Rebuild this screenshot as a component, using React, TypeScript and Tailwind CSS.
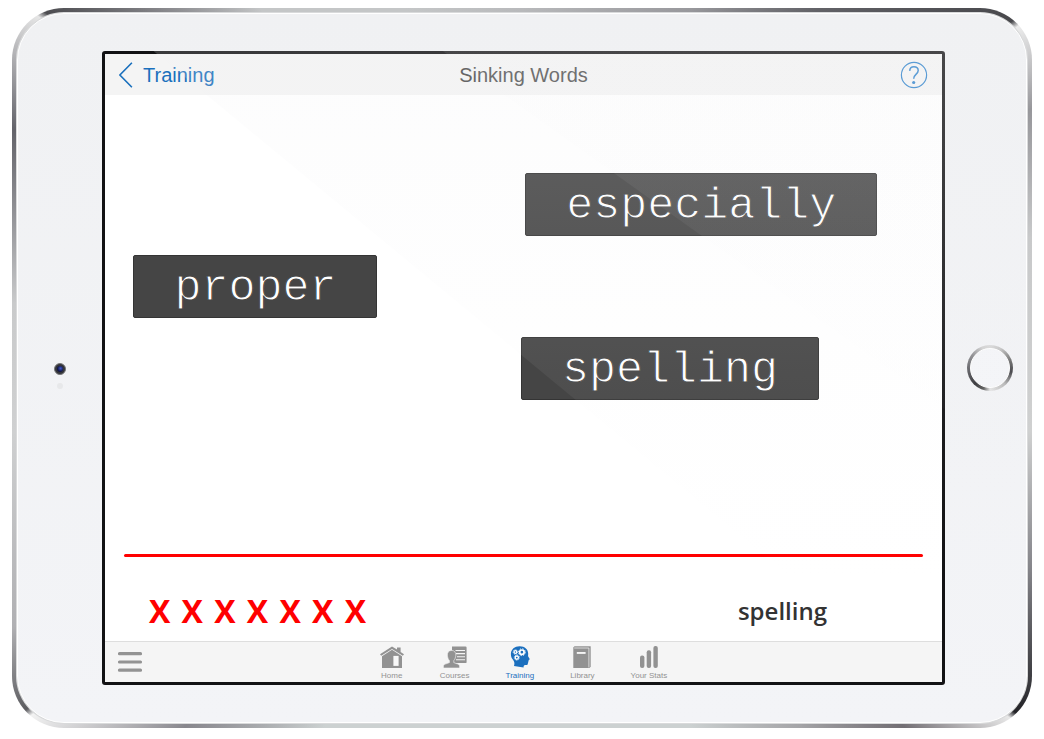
import type { ReactNode } from "react";

const words = [
  { text: "especially", place: "left-[50.2%] top-[17%]" },
  { text: "proper", place: "left-[3.4%] top-[34.9%]" },
  { text: "spelling", place: "left-[49.7%] top-[52.7%]" },
];

function HomeIcon() {
  return (
    <svg viewBox="0 0 24 22" className="h-[22px] w-6" fill="currentColor" aria-hidden="true">
      <path d="M12 0.4 L17 3.6 V1.6 H20.6 V6 L24 8.3 L22.8 9.8 L12 2.9 L1.2 9.8 L0 8.3 Z" />
      <path d="M12 3.8 L22 10.2 V22 H2 V10.2 Z" />
      <rect x="13.4" y="9.9" width="5.2" height="10" fill="#f8f8f8" />
    </svg>
  );
}

function CoursesIcon() {
  return (
    <svg viewBox="0 0 24 22" className="h-[22px] w-6" fill="currentColor" aria-hidden="true">
      <path d="M9 .5 H22.4 Q23.6 .5 23.6 1.7 V15.9 Q23.6 17.1 22.4 17.1 H9 Z" />
      <path d="M12.500 4.500 H22 M13 7.600 H22 M14 10.700 H22 M13 13.800 H22" stroke="#f5f5f5" strokeWidth="1.100" />
      <path
        d="M8.600 4.400 C11.600 4.400 12.900 6.600 12.800 9.200 C12.700 11.600 11.800 13.500 10.800 14.600 V16.600 C13.200 17.600 16 18 16.600 19.800 V22 H.4 V19.800 C1 18 4.200 17.600 6.400 16.600 V14.600 C5.400 13.500 4.500 11.600 4.400 9.200 C4.300 6.600 5.600 4.400 8.600 4.400 Z"
        stroke="#f5f5f5"
        strokeWidth="0.6"
      />
    </svg>
  );
}

function TrainingIcon() {
  return (
    <svg viewBox="0 0 20 22" className="h-[22px] w-5" fill="currentColor" aria-hidden="true">
      <path d="M9.600 .3 C15 .3 18.200 3.700 18.200 7.800 C18.200 9 17.900 9.600 18.200 10.400 L19.700 13 C19.900 13.500 19.500 13.800 18.600 14 C18.800 14.900 18.500 15.300 18.200 15.700 C18.400 16.300 18.100 16.700 17.900 17.200 C18 18.700 17 19.200 15.400 19 C13.900 18.900 13.500 19.700 13.600 21.600 L4 20 C4.800 17.700 4.500 15.900 3 13.800 C1.600 12.200 .8 10.300 .9 7.700 C1.200 3.300 4.600 .3 9.600 .3 Z" />
      <g fill="none" stroke="#fff">
        <circle cx="11.900" cy="6.200" r="2.200" strokeWidth="1.700" />
        <circle cx="11.900" cy="6.200" r="3.400" strokeWidth="1" strokeDasharray="1.335 1.335" />
        <circle cx="5.400" cy="6" r="1.400" strokeWidth="1.300" />
        <circle cx="5.400" cy="6" r="2.300" strokeWidth=".8" strokeDasharray=".9 .9" />
        <circle cx="6.800" cy="11.600" r="1.600" strokeWidth="1.400" />
        <circle cx="6.800" cy="11.600" r="2.600" strokeWidth=".8" strokeDasharray="1.020 1.020" />
      </g>
    </svg>
  );
}

function LibraryIcon() {
  return (
    <svg viewBox="0 0 18 22" className="h-[22px] w-[18px]" fill="currentColor" aria-hidden="true">
      <path d="M1.500 .3 H17.700 V20.800 L16.500 22 H.3 V1.500 Z" />
      <path d="M1.200 2 H15.900 V21.500" stroke="#f5f5f5" strokeWidth=".7" fill="none" />
      <rect x="3.800" y="6" width="8.800" height="1.900" fill="#f5f5f5" />
    </svg>
  );
}

function StatsIcon() {
  return (
    <svg viewBox="0 0 18 22" className="h-[22px] w-[18px]" fill="currentColor" aria-hidden="true">
      <rect x="0" y="9.500" width="4.400" height="12.500" rx="2" />
      <rect x="6.700" y="4.300" width="4.400" height="17.700" rx="2" />
      <rect x="13.400" y="0" width="4.400" height="22" rx="2" />
    </svg>
  );
}

const tabs: { label: string; icon: ReactNode; active?: boolean }[] = [
  { label: "Home", icon: <HomeIcon /> },
  { label: "Courses", icon: <CoursesIcon /> },
  { label: "Training", icon: <TrainingIcon />, active: true },
  { label: "Library", icon: <LibraryIcon /> },
  { label: "Your Stats", icon: <StatsIcon /> },
];

function Header() {
  return (
    <header className="grid h-[41px] shrink-0 grid-cols-[1fr_auto_1fr] items-center bg-[#f4f4f4] px-3.5 text-xl">
      <a href="#training" className="flex items-center gap-2.5 text-[#1a70bd]">
        <svg viewBox="0 0 14 26" className="h-[26px] w-3.5" fill="none" stroke="currentColor" strokeWidth="1.600" aria-hidden="true">
          <path d="M12.900 .8 L.9 13 L12.900 25.200" />
        </svg>
        Training
      </a>
      <h1 className="text-[#4a4a4a]">Sinking Words</h1>
      <button type="button" aria-label="Help" className="justify-self-end text-[#2f83cc]">
        <svg viewBox="0 0 28 28" className="size-7" fill="none" stroke="currentColor" aria-hidden="true">
          <circle cx="14" cy="14" r="12.600" strokeWidth="1.200" />
          <path d="M9.700 9.900 C9.800 7 11.400 5.700 13.900 5.700 C16.500 5.700 18.200 7.200 18.200 9.600 C18.200 13.200 13.700 13.200 13.700 17.800" strokeWidth="1.500" />
          <circle cx="13.700" cy="21.500" r="1.600" fill="currentColor" stroke="none" />
        </svg>
      </button>
    </header>
  );
}

function Footer() {
  return (
    <footer className="grid h-[41px] shrink-0 grid-cols-[1fr_auto_1fr] items-center border-t border-[#dedede] bg-[#f5f5f5] px-3">
      <button type="button" aria-label="Menu" className="justify-self-start text-[#939393]">
        <svg viewBox="0 0 26 22" className="h-[22px] w-[26px]" stroke="currentColor" strokeWidth="3.200" strokeLinecap="round" aria-hidden="true">
          <path d="M2.500 2.700 H23.500 M2.500 11 H23.500 M2.500 19.200 H23.500" />
        </svg>
      </button>
      <nav className="flex gap-9 pt-1">
        {tabs.map((tab) => (
          <a
            key={tab.label}
            href={"#" + tab.label.toLowerCase().replace(" ", "-")}
            aria-current={tab.active ? "page" : undefined}
            className={
              "flex flex-col items-center gap-0.5 text-[8px] leading-3 " +
              (tab.active ? "text-[#1b6fbe]" : "text-[#929292]")
            }
          >
            {tab.icon}
            {tab.label}
          </a>
        ))}
      </nav>
    </footer>
  );
}

export default function App() {
  return (
    <div className="flex min-h-screen bg-white px-3 pt-2 pb-[11px] font-['Liberation_Sans',Arial,sans-serif]">
      <div className="flex flex-1 rounded-[52px] bg-[conic-gradient(from_0deg_at_50%_50%,#b8b9bb_0%,#98989c_7%,#626267_11%,#48484c_15.200%,#ececec_15.400%,#97979b_17.500%,#c8c9ca_21%,#cfd0d0_27%,#85858a_31%,#232327_34.700%,#e8e8e8_34.900%,#736f74_37%,#a5a5a8_39.500%,#ccd1d1_43%,#ccd1d1_58%,#88878d_62%,#f2f2f2_65.200%,#5c5c60_65.400%,#b0b0b3_67.500%,#cfd0d1_73%,#c9cacb_77%,#63636a_82%,#e6e6e6_85%,#4c4c50_85.200%,#88888c_87.500%,#c4c6c7_90%,#c4c6c7_95%,#b8b9bb_100%)] p-1">
        <div className="flex flex-1 rounded-[48px] bg-[#d9dadb] p-px">
          <div className="relative flex flex-1 overflow-hidden rounded-[47px] border border-white bg-linear-to-b from-[#f0f1f3] to-[#f3f4f7] py-[37px]">
            <div className="flex w-[84px] shrink-0 flex-col items-center justify-center gap-2 pt-4">
              <span className="flex size-3 items-center justify-center rounded-full border border-[#77787a] bg-[#333439]">
                <span className="size-1.5 rounded-full bg-[radial-gradient(circle_at_60%_40%,#4059c8,#10154a_60%,#15161c)]" />
              </span>
              <span className="size-1.5 rounded-full bg-[#e7e8ea]" />
            </div>

            <main className="flex min-w-0 flex-1 flex-col rounded-[3px] border-[3px] border-[#121214] bg-white">
              <Header />
              <section aria-label="Falling words" className="relative min-h-[400px] flex-1">
                {words.map((word) => (
                  <div
                    key={word.text}
                    className={
                      "absolute rounded-[2px] border border-[#343434] bg-[#454545] px-10 pt-1.5 pb-0.5 font-['Liberation_Mono','Courier_New',monospace] text-[45px] leading-[53px] text-white [-webkit-text-stroke:1px_#454545] " +
                      word.place
                    }
                  >
                    {word.text}
                  </div>
                ))}
              </section>
              <div className="mx-[19px] h-[3px] shrink-0 rounded-full bg-[#ff0000]" />
              <div className="flex h-[84px] shrink-0 items-center justify-between pt-6 pr-[115px] pl-11 font-['Open_Sans',sans-serif]">
                <div className="flex w-[217px] justify-between text-[32px] leading-10 font-bold text-[#ff0000]">
                  {Array.from({ length: 7 }, (_, i) => (
                    <span key={i}>X</span>
                  ))}
                </div>
                <output className="text-2xl font-semibold text-[#333]">spelling</output>
              </div>
              <Footer />
            </main>

            <div className="flex w-[81px] shrink-0 items-center justify-center pl-2">
              <button
                type="button"
                aria-label="Home button"
                className="size-[46px] rounded-full bg-[conic-gradient(#d8d8d8_0%,#c4c4c4_8%,#666_20%,#3c3c40_28%,#b5b5b5_38%,#e4e4e4_50%,#555_55%,#2f2f33_62%,#55555a_72%,#8a8a8d_85%,#d0d0d0_94%,#d8d8d8_100%)] p-[3px]"
              >
                <span className="block size-full rounded-full border border-white bg-[#f4f5f8]" />
              </button>
            </div>

            {/* Diagonal sheen across the glass */}
            <div className="pointer-events-none absolute inset-0 bg-linear-to-b from-[#f1f1f3]/19 via-[#f1f1f3]/6 via-50% to-transparent to-80% [clip-path:polygon(9%_0,100%_0,100%_100%,94%_100%)]" />
            <div className="pointer-events-none absolute inset-0 bg-linear-to-b from-[#f1f1f3]/8 via-[#f1f1f3]/4 via-40% to-transparent to-70% [clip-path:polygon(37%_0,100%_0,100%_64%)]" />
          </div>
        </div>
      </div>
    </div>
  );
}
